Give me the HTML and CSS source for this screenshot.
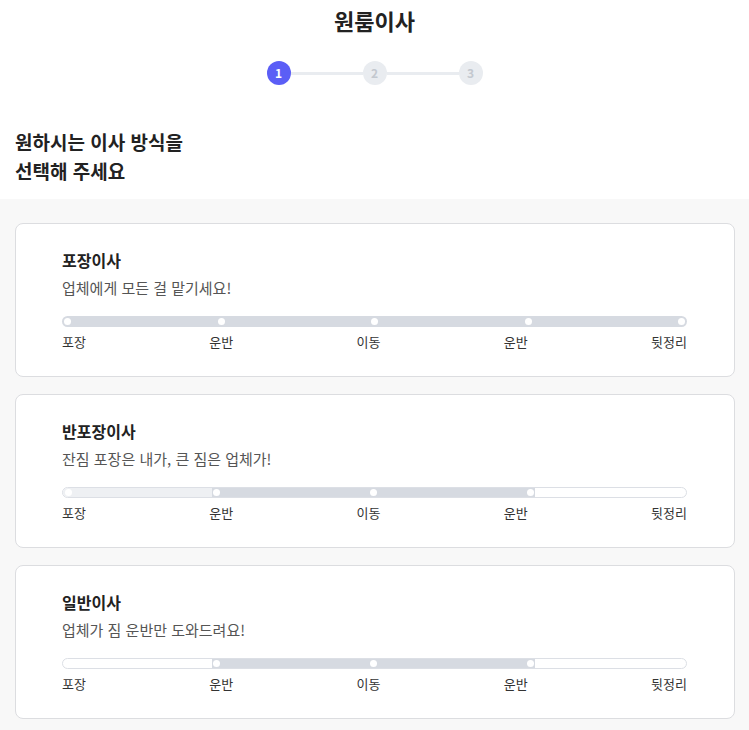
FILE: index.html
```html
<!DOCTYPE html>
<html lang="ko">
<head>
<meta charset="utf-8">
<title>원룸이사</title>
<link rel="stylesheet" href="styles.css">
</head>
<body>
<header class="top">
  <h1 class="title">원룸이사</h1>
  <div class="stepper">
    <span class="step active">1</span>
    <span class="line"></span>
    <span class="step">2</span>
    <span class="line"></span>
    <span class="step">3</span>
  </div>
  <h2 class="question">원하시는 이사 방식을<br>선택해 주세요</h2>
</header>
<main class="options">
  <section class="card">
    <h3 class="card-title">포장이사</h3>
    <p class="card-desc">업체에게 모든 걸 맡기세요!</p>
    <div class="track track-full">
      <span class="dot"></span><span class="dot"></span><span class="dot"></span><span class="dot"></span><span class="dot"></span>
    </div>
    <div class="labels"><span>포장</span><span>운반</span><span>이동</span><span>운반</span><span>뒷정리</span></div>
  </section>
  <section class="card">
    <h3 class="card-title">반포장이사</h3>
    <p class="card-desc">잔짐 포장은 내가, 큰 짐은 업체가!</p>
    <div class="track track-outline">
      <span class="seg seg-light"><span class="dot"></span></span>
      <span class="seg seg-mid"><span class="dot"></span><span class="dot"></span><span class="dot"></span></span>
    </div>
    <div class="labels"><span>포장</span><span>운반</span><span>이동</span><span>운반</span><span>뒷정리</span></div>
  </section>
  <section class="card">
    <h3 class="card-title">일반이사</h3>
    <p class="card-desc">업체가 짐 운반만 도와드려요!</p>
    <div class="track track-outline">
      <span class="seg seg-mid"><span class="dot"></span><span class="dot"></span><span class="dot"></span></span>
    </div>
    <div class="labels"><span>포장</span><span>운반</span><span>이동</span><span>운반</span><span>뒷정리</span></div>
  </section>
</main>
</body>
</html>
```

FILE: styles.css
```css
* { box-sizing: border-box; }
html, body { margin: 0; padding: 0; }
body {
  font-family: "Noto Sans CJK KR", "Noto Sans", sans-serif;
  color: #222;
  background: #f8f8f8;
  min-height: 730px;
}
.top {
  background: #fff;
  padding-bottom: 14.5px;
}
.title {
  margin: 0;
  font-size: 22px;
  line-height: 40px;
  font-weight: 700;
  text-align: center;
  color: #222;
}
.stepper {
  margin-top: 21px;
  display: flex;
  justify-content: center;
  align-items: center;
}
.step {
  width: 24px;
  height: 24px;
  border-radius: 50%;
  background: #e9ecf0;
  color: #c3c8cf;
  font-size: 12px;
  font-weight: 700;
  display: flex;
  align-items: center;
  justify-content: center;
  line-height: 1;
}
.step.active {
  background: #5b5ef6;
  color: #fff;
}
.line {
  width: 72px;
  height: 3px;
  background: #e9ecf0;
}
.question {
  margin: 41.5px 0 0 15px;
  font-size: 19px;
  line-height: 29px;
  font-weight: 700;
  color: #222;
}
.options {
  padding: 24px 14px 10px 15px;
  display: flex;
  flex-direction: column;
  gap: 17px;
}
.card {
  background: #fff;
  border: 1px solid #dcdde0;
  border-radius: 8px;
  padding: 25px 47px 25px 46px;
}
.card-title {
  margin: 0;
  font-size: 16px;
  line-height: 22px;
  font-weight: 700;
  color: #222;
}
.card-desc {
  margin: 6px 0 0;
  font-size: 15px;
  line-height: 22px;
  color: #555;
}
.track {
  position: relative;
  margin-top: 16.5px;
  height: 11px;
  border-radius: 6px;
  overflow: hidden;
}
.track-full {
  background: #d6dae1;
  display: flex;
  justify-content: space-between;
  align-items: center;
  padding: 0 2px;
}
.track-outline {
  background: #fff;
  border: 1px solid #dcdfe5;
}
.seg {
  position: absolute;
  top: 0;
  bottom: 0;
  display: flex;
  justify-content: space-between;
  align-items: center;
  padding: 0 1px;
}
.seg-light { left: 0; width: 23.9%; background: #eef0f3; padding-left: 2px; }
.seg-mid { left: 23.9%; right: 24.2%; background: #d6dae1; }
.dot {
  position: relative;
  width: 7px;
  height: 7px;
  border-radius: 50%;
  background: #fff;
}
.labels {
  margin-top: 6.5px;
  display: flex;
  justify-content: space-between;
  font-size: 13px;
  line-height: 18px;
  color: #333;
}
```
